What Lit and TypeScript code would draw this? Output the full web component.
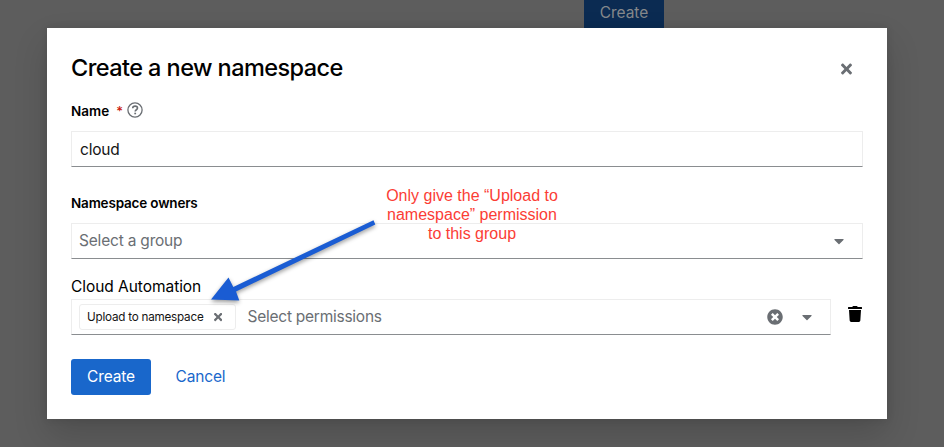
import { LitElement, html, css } from "lit";
import { customElement } from "lit/decorators.js";

const times = html`<svg viewBox="0 0 352 512" fill="currentColor"><path d="M242.72 256l100.07-100.07c12.28-12.28 12.28-32.19 0-44.48l-22.24-22.24c-12.28-12.28-32.19-12.28-44.48 0L176 189.28 75.93 89.21c-12.28-12.28-32.19-12.28-44.48 0L9.21 111.45c-12.28 12.28-12.28 32.19 0 44.48L109.28 256 9.21 356.07c-12.28 12.28-12.28 32.19 0 44.48l22.24 22.24c12.28 12.28 32.2 12.28 44.48 0L176 322.72l100.07 100.07c12.28 12.28 32.2 12.28 44.48 0l22.24-22.24c12.28-12.28 12.28-32.19 0-44.48L242.72 256z"/></svg>`;
const caret = html`<svg class="caret" viewBox="0 0 320 512" fill="currentColor"><path d="M31.3 192h257.3c17.8 0 26.7 21.5 14.1 34.1L174.1 354.8c-7.8 7.8-20.5 7.8-28.3 0L17.2 226.1C4.6 213.5 13.5 192 31.3 192z"/></svg>`;

@customElement("app-root")
export class AppRoot extends LitElement {
  static styles = css`
    :host {
      display: block;
      position: relative;
      width: 944px;
      height: 447px;
      overflow: hidden;
      background: #5d5d5d;
      font: 15.5px/24px Inter, "Noto Sans", sans-serif;
      color: #151515;
    }
    * { box-sizing: border-box; }
    svg { display: block; flex: none; }
    .text { white-space: nowrap; }
    .page { height: 28px; padding-left: 584px; }
    .behind {
      width: 80px; height: 28px; padding-top: 1px; text-align: center;
      background: #0b2b52; color: #85888b; letter-spacing: -0.08px;
    }
    .modal {
      position: relative;
      width: 840px; height: 391px; margin-left: 47px; padding: 24px;
      background: #fff;
      box-shadow: 0 16px 32px rgba(3,3,3,.16), 0 0 8px rgba(3,3,3,.1);
    }
    .head { display: flex; justify-content: space-between; height: 32px; color: #000; }
    h1 { margin: 0; font-size: 23.5px; line-height: 31px; font-weight: 500; letter-spacing: -0.57px; }
    .close { width: 11px; height: 16px; margin: 9px 11px 0 0; color: #6a6e73; }
    .label {
      display: flex; align-items: center; height: 20px;
      font-size: 13.5px; line-height: 20px; font-weight: 600; letter-spacing: -0.18px; color: #000;
    }
    .name { margin-top: 17px; }
    .name .text { letter-spacing: 0; }
    .star { margin-left: 7px; color: #c9190b; font-weight: 500; font-size: 13px; }
    .help { margin: -2px 0 0 4px; }
    .field {
      display: flex; align-items: center; height: 36px;
      border: 1px solid #ededed; border-bottom-color: #8a8d90;
      color: #6a6e73;
    }
    .input { margin-top: 10px; padding: 1px 0 0 8px; color: #151515; }
    .owners { margin-top: 26px; }
    .select { margin-top: 10px; padding: 0 18px 1px 7px; justify-content: space-between; }
    .caret { width: 10px; height: 16px; }
    .group { margin-top: 16px; height: 24px; color: #000; }
    .row { display: flex; align-items: flex-start; }
    .perms { width: 760px; padding: 0 18px 0 7px; }
    .chip {
      display: flex; align-items: center; width: 157px; height: 26px; padding-left: 7px;
      border: 1px solid #ededed; border-radius: 3px; color: #151515; font-size: 11.7px;
    }
    .chip svg { width: 8.25px; height: 12px; color: #6a6e73; margin-left: 10px; }
    .placeholder { margin-left: 11.5px; flex: 1; }
    .clear { width: 16px; height: 16px; margin-right: 19px; }
    .trash { margin: 7px 0 0 17px; }
    .actions { display: flex; align-items: center; gap: 24.5px; margin-top: 24px; }
    .btn {
      display: block; border: 0; margin: 0; height: 36px; width: 80px; padding: 0;
      border-radius: 3px; background: #1967cb; color: #fff; font: inherit; text-align: center;
    }
    .link { width: auto; background: none; color: #1967cb; }
    .s-cloud { letter-spacing: -0.2px; }
    .s-group { letter-spacing: -0.2px; }
    .s-auto { letter-spacing: -0.05px; }
    .s-chip { letter-spacing: -0.23px; width: 117px; }
    .s-perm { letter-spacing: -0.25px; }
    .s-btn { letter-spacing: -0.15px; }
    .note {
      position: absolute; left: 325px; top: 158px; width: 200px;
      font: 16px/19px "Liberation Sans", Arial, sans-serif; text-align: center; color: #fb3d35;
    }
    .arrow {
      position: absolute; left: 153px; top: 182px;
      filter: drop-shadow(0 2px 2px rgba(0,0,0,.4));
    }
  `;

  render() {
    return html`
      <div class="page"><div class="behind text">Create</div></div>
      <div class="modal">
        <div class="head"><h1 class="text">Create a new namespace</h1><div class="close">${times}</div></div>
        <div class="label name"><span class="text">Name</span><span class="star">*</span>
          <svg class="help" width="16" height="16" viewBox="0 0 16 16" fill="none" stroke="#6a6e73">
            <circle cx="8" cy="8" r="7.1" stroke-width="1.3"/>
            <path d="M5.7 6.2C5.8 4.8 6.8 4.1 8.1 4.1c1.4 0 2.4.8 2.4 2 0 1.6-2.3 1.7-2.3 3.4" stroke-width="1.6"/>
            <path d="M7.3 10.7h1.8v1.6H7.3z" fill="#6a6e73" stroke="none"/>
          </svg>
        </div>
        <div class="field input"><span class="text s-cloud">cloud</span></div>
        <div class="label owners"><span class="text">Namespace owners</span></div>
        <div class="field select"><span class="text s-group">Select a group</span>${caret}</div>
        <div class="group"><span class="text s-auto">Cloud Automation</span></div>
        <div class="row">
          <div class="field perms">
            <div class="chip"><span class="text s-chip">Upload to namespace</span>${times}</div>
            <span class="text placeholder s-perm">Select permissions</span>
            <svg class="clear" viewBox="0 0 512 512" fill="currentColor"><path d="M256 8C119 8 8 119 8 256s111 248 248 248 248-111 248-248S393 8 256 8zm121.600 313.100c4.700 4.700 4.700 12.300 0 17L338 377.600c-4.700 4.700-12.300 4.700-17 0L256 312l-65.100 65.600c-4.700 4.700-12.300 4.700-17 0L134.400 338c-4.700-4.700-4.700-12.300 0-17l65.600-65-65.600-65.100c-4.700-4.700-4.700-12.300 0-17l39.600-39.600c4.700-4.700 12.300-4.700 17 0l65 65.700 65.100-65.600c4.700-4.700 12.300-4.700 17 0l39.600 39.600c4.700 4.700 4.700 12.300 0 17L312 256l65.600 65.100z"/></svg>
            ${caret}
          </div>
          <svg class="trash" width="14" height="16" viewBox="0 0 448 512" fill="#000"><path d="M432 32H312l-9.400-18.700A24 24 0 0 0 281.100 0H166.800a23.700 23.700 0 0 0-21.400 13.300L136 32H16A16 16 0 0 0 0 48v32a16 16 0 0 0 16 16h416a16 16 0 0 0 16-16V48a16 16 0 0 0-16-16zM53.200 467a48 48 0 0 0 47.900 45h245.800a48 48 0 0 0 47.900-45L416 128H32z"/></svg>
        </div>
        <div class="actions">
          <button class="btn s-btn">Create</button><button class="btn link s-btn">Cancel</button>
        </div>
        <div class="note">Only give the “Upload to<br>namespace” permission<br>to this group</div>
        <svg class="arrow" width="190" height="100" viewBox="0 0 190 100"><path d="M173.500 10.200L175.300 14.500 36 81.500l3.300 9L11 89.500l17.500-22 4.800 9.500z" fill="#1a5cd3"/></svg>
      </div>`;
  }
}
